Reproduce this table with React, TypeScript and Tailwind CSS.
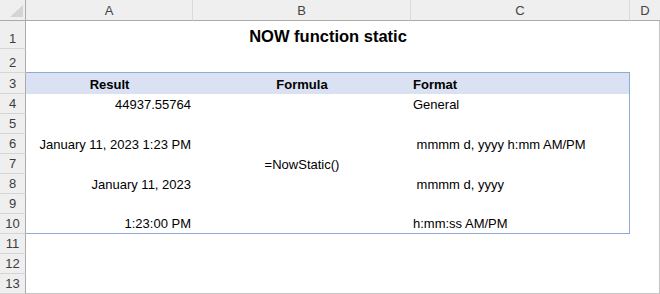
const font = { fontFamily: '"Liberation Sans", Arial, sans-serif' }

type Row = {
  n: number
  a?: string
  b?: string
  c?: string
}

const body: Row[] = [
  { n: 4, a: '44937.55764', c: 'General' },
  { n: 5 },
  { n: 6, a: 'January 11, 2023 1:23 PM', c: ' mmmm d, yyyy h:mm AM/PM' },
  { n: 7, b: '=NowStatic()' },
  { n: 8, a: 'January 11, 2023', c: ' mmmm d, yyyy' },
  { n: 9 },
  { n: 10, a: '1:23:00 PM', c: 'h:mm:ss AM/PM' },
]

function RowHead({ n }: { n: number }) {
  return (
    <div className="flex items-end justify-center border-r border-b border-r-[#ababab] border-b-[#d5d5d5] bg-[#efefef] pb-[2px] text-[13px] leading-[15px] text-[#3c3c3c]">
      {n}
    </div>
  )
}

function ColHead({ label, last }: { label: string; last?: boolean }) {
  return (
    <div
      className={
        'flex items-center justify-center border-b border-[#ababab] bg-[#efefef] text-[13px] text-[#444] ' +
        (last ? '' : 'border-r border-r-[#d9d9d9]')
      }
    >
      {label}
    </div>
  )
}

export default function App() {
  return (
    <div className="h-[294px] w-[660px] overflow-hidden bg-white" style={font}>
      <div className="grid w-[660px] grid-cols-[26px_167px_218px_219px_30px] grid-rows-[21px_28px_24px_21px_repeat(10,20px)] border-r border-[#c6c6c6] text-[13px] leading-[15px] text-black">
        {/* column headers */}
        <div className="relative border-r border-b border-[#ababab] bg-[#efefef]">
          <svg className="absolute left-[10px] top-[5px]" width="13" height="12" viewBox="0 0 13 12">
            <polygon points="13,0 13,12 0,12" fill="#d4d4d4" />
          </svg>
        </div>
        <ColHead label="A" />
        <ColHead label="B" />
        <ColHead label="C" />
        <ColHead label="D" last />

        {/* row 1: title */}
        <RowHead n={1} />
        <div className="col-span-3 flex items-end justify-center pb-[3px] text-[16.5px] font-bold leading-[19px]">
          NOW function static
        </div>
        <div />

        {/* row 2 */}
        <RowHead n={2} />
        <div className="col-span-3 border-b border-[#8ea9db]" />
        <div />

        {/* row 3: table header */}
        <RowHead n={3} />
        <div className="flex items-end justify-center bg-[#d9e1f2] pb-[2px] font-bold">Result</div>
        <div className="flex items-end justify-center bg-[#d9e1f2] pb-[2px] font-bold">Formula</div>
        <div className="flex items-end border-r border-[#8ea9db] bg-[#d9e1f2] pb-[2px] pl-[2px] font-bold">Format</div>
        <div />

        {body.map((r) => {
          const last = r.n === 10
          const edge = last ? 'border-b border-[#8ea9db]' : ''
          return (
            <div key={r.n} className="contents">
              <RowHead n={r.n} />
              <div className={'flex items-end justify-end pb-[2px] pr-[2px] ' + edge}>{r.a}</div>
              <div className={'flex items-end justify-center pb-[2px] ' + edge}>{r.b}</div>
              <div className={'flex items-end whitespace-pre border-r border-[#8ea9db] pb-[2px] pl-[2px] ' + edge}>{r.c}</div>
              <div />
            </div>
          )
        })}

        {[11, 12, 13].map((n) => (
          <div key={n} className="contents">
            <RowHead n={n} />
            <div className={n === 13 ? 'col-span-4 border-b border-[#c6c6c6]' : 'col-span-4'} />
          </div>
        ))}
      </div>
    </div>
  )
}
